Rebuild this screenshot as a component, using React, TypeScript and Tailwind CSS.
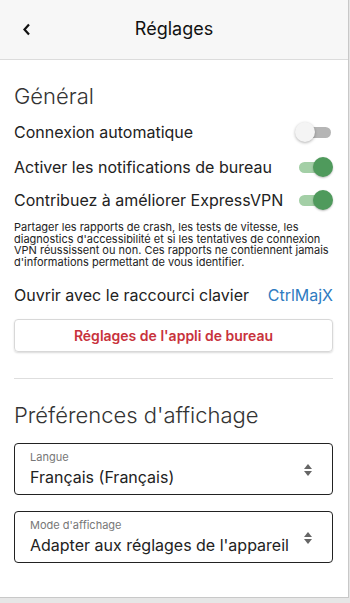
import React from "react";

function Toggle({ on }: { on: boolean }) {
  return (
    <div className="relative w-[36px] h-[20px] shrink-0">
      <div
        className={
          "absolute left-[2px] right-[2px] top-[5px] h-[11px] rounded-full " +
          (on ? "bg-[#a3cfa6]" : "bg-[#b5b5b5]")
        }
      />
      <div
        className={
          "absolute top-0 w-[20px] h-[20px] rounded-full " +
          (on
            ? "right-0 bg-[#4f9a5c] shadow-[0_1px_2px_rgba(0,0,0,0.25)]"
            : "left-[-2px] bg-[#f4f4f4] shadow-[0_1px_3px_rgba(0,0,0,0.3)]")
        }
      />
    </div>
  );
}

function SelectBox({ label, value }: { label: string; value: string }) {
  return (
    <div className="relative border border-[#222] rounded-[4px] h-[52px] px-[15px] pt-[6px]">
      <div className="text-[11px] leading-[14px] text-[#777]">{label}</div>
      <div className="text-[16px] leading-[22px] text-[#222] mt-[2px] whitespace-nowrap">{value}</div>
      <svg
        className="absolute right-[20px] top-[20px]"
        width="8"
        height="12"
        viewBox="0 0 8 12"
      >
        <path d="M4 0 L8 5 L0 5 Z" fill="#666" />
        <path d="M0 7 L8 7 L4 12 Z" fill="#666" />
      </svg>
    </div>
  );
}

export default function App() {
  return (
    <div
      className="w-[350px] h-[603px] bg-[#e6e6e6] overflow-hidden"
      style={{ fontFamily: "Inter, sans-serif" }}
    >
      <div className="w-[349px] h-[598px] bg-white border-r border-b border-[#c8c8c8] flex flex-col">
        <div className="relative h-[60px] bg-[#f7f7f7] border-b border-[#dcdcdc] flex items-center justify-center shrink-0">
          <svg
            className="absolute left-[22px] top-[23px]"
            width="9"
            height="13"
            viewBox="0 0 9 13"
          >
            <path d="M7 1.5 L2.5 6.5 L7 11.5" stroke="#111" strokeWidth="2.2" fill="none" />
          </svg>
          <div className="text-[18px] text-[#111] mt-[-2px]">Réglages</div>
        </div>
        <div className="px-[14px] pr-[15px]">
          <div className="text-[22px] leading-[30px] text-[#333] mt-[21px] font-light">Général</div>
          <div className="flex items-center justify-between mt-[10px] h-[22px]">
            <span className="text-[16px] leading-[22px] text-[#222]">Connexion automatique</span>
            <Toggle on={false} />
          </div>
          <div className="flex items-center justify-between mt-[13px] h-[22px]">
            <span className="text-[16px] leading-[22px] text-[#222]">Activer les notifications de bureau</span>
            <Toggle on={true} />
          </div>
          <div className="flex items-center justify-between mt-[11px] h-[22px]">
            <span className="text-[16px] leading-[22px] text-[#222]">Contribuez à améliorer ExpressVPN</span>
            <Toggle on={true} />
          </div>
          <p className="text-[11px] leading-[11.7px] text-[#222] mt-[11px]">
            Partager les rapports de crash, les tests de vitesse, les diagnostics d'accessibilité et si les tentatives de connexion VPN réussissent ou non. Ces rapports ne contiennent jamais d'informations permettant de vous identifier.
          </p>
          <div className="flex items-center justify-between mt-[15px] h-[22px]">
            <span className="text-[16px] leading-[22px] text-[#222]">Ouvrir avec le raccourci clavier</span>
            <span className="text-[16px] leading-[22px] text-[#2f7bc1]">CtrlMajX</span>
          </div>
          <div className="mt-[13px] h-[33px] border border-[#d8d8d8] rounded-[4px] shadow-[0_1px_2px_rgba(0,0,0,0.15)] flex items-center justify-center">
            <span className="text-[14px] font-semibold text-[#c8323c]">Réglages de l'appli de bureau</span>
          </div>
          <div className="mt-[26px] border-t border-[#dedede]" />
          <div className="text-[22px] leading-[30px] text-[#333] mt-[21px] font-light">Préférences d'affichage</div>
          <div className="mt-[13px]">
            <SelectBox label="Langue" value="Français (Français)" />
          </div>
          <div className="mt-[16px]">
            <SelectBox label="Mode d'affichage" value="Adapter aux réglages de l'appareil" />
          </div>
        </div>
      </div>
    </div>
  );
}
